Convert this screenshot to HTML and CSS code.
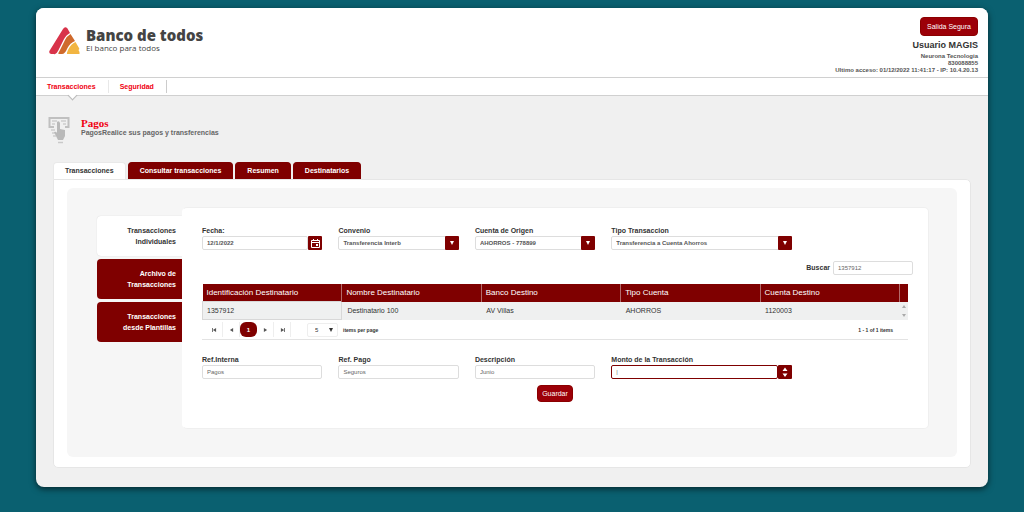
FILE: index.html
```html
<!DOCTYPE html>
<html lang="es">
<head>
<meta charset="utf-8">
<title>Banco de todos - Pagos</title>
<link rel="stylesheet" href="styles.css">
</head>
<body>
<div class="shell">
  <header class="header">
    <div class="brand">
      <svg class="brand-mark" viewBox="0 0 31 28" aria-hidden="true">
        <path fill="#d8334a" d="M14 2Q16-1 18.500 1.500L21 6Q17 8 14.500 13L9 24Q7 28 5 27H2Q-1 26 1 23Z"/>
        <path fill="#cf6a2c" d="M21.500 7L26 14Q21 16 18.500 21Q16 27 13 27H9.500Q9 26 11 23L16 13Q18 9 21.500 7Z"/>
        <path fill="#f2b541" d="M26.500 15L30 21Q31 22 29.500 23Q31 25 30.500 27H18Q17.500 26 19.500 22Q22 17 26.500 15Z"/>
      </svg>
      <div class="brand-text">
        <strong class="brand-name">Banco de todos</strong>
        <span class="brand-tag">El banco para todos</span>
      </div>
    </div>
    <div class="account">
      <button class="button" type="button">Salida Segura</button>
      <strong class="user">Usuario MAGIS</strong>
      <span>Neurona Tecnologia</span>
      <span>830088855</span>
      <span>Ultimo acceso: 01/12/2022 11:41:17 - IP: 10.4.20.13</span>
    </div>
  </header>
  <nav class="nav">
    <a class="nav-link nav-current" href="#transacciones">Transacciones</a>
    <a class="nav-link" href="#seguridad">Seguridad</a>
  </nav>
  <main class="main">
    <div class="page-title">
      <svg class="page-icon" viewBox="0 0 24 28" aria-hidden="true">
        <path fill="none" stroke="#c0c0c0" stroke-width="2" d="M6 11H1.500V2H20.500V11H17"/>
        <path fill="none" stroke="#bcbcbc" d="M4 5H9M4 8H7M13 5H18M15 8H18M3 14H7M4 17H7M5 20H8"/>
        <path fill="#b9b9b9" d="M9 6Q11 4 12 7V13L17 14V20L15 24H10L6 16Q8 15 9 17Z"/>
        <path stroke="#c9c9c9" stroke-width="1.500" d="M10 26.500H15"/>
      </svg>
      <div>
        <h1 class="title">Pagos</h1>
        <p class="subtitle">PagosRealice sus pagos y transferencias</p>
      </div>
    </div>
    <div class="tabs" role="tablist">
      <button class="tab tab-current" type="button" role="tab" aria-selected="true">Transacciones</button>
      <button class="tab" type="button" role="tab">Consultar transacciones</button>
      <button class="tab" type="button" role="tab">Resumen</button>
      <button class="tab" type="button" role="tab">Destinatarios</button>
    </div>
    <section class="card">
      <div class="well">
        <div class="side" role="tablist">
          <button class="side-tab side-current" type="button" role="tab" aria-selected="true">Transacciones<br>Individuales</button>
          <button class="side-tab" type="button" role="tab">Archivo de<br>Transacciones</button>
          <button class="side-tab" type="button" role="tab">Transacciones<br>desde Plantillas</button>
        </div>
        <form class="panel">
          <div class="fields">
            <div class="field">
              <label for="fecha">Fecha:</label>
              <div class="control">
                <input class="input strong" id="fecha" type="text" value="12/1/2022">
                <button class="addon" type="button" aria-label="Calendario">
                  <svg class="calendar" viewBox="0 0 9 9"><path fill="none" stroke="#fff" d="M0.500 1.500H8.500V8.500H0.500ZM1 3.500H8M2.500 0V2M6.500 0V2"/><path fill="#fff" d="M5 5H7V7H5Z"/></svg>
                </button>
              </div>
            </div>
            <div class="field">
              <label for="convenio">Convenio</label>
              <div class="control">
                <select class="input strong" id="convenio"><option>Transferencia Interb</option></select>
                <span class="addon over"><i class="down"></i></span>
              </div>
            </div>
            <div class="field">
              <label for="cuenta">Cuenta de Origen</label>
              <div class="control">
                <select class="input strong" id="cuenta"><option>AHORROS - 778899</option></select>
                <span class="addon over"><i class="down"></i></span>
              </div>
            </div>
            <div class="field">
              <label for="tipo">Tipo Transaccion</label>
              <div class="control">
                <select class="input strong" id="tipo"><option>Transferencia a Cuenta Ahorros</option></select>
                <span class="addon over"><i class="down"></i></span>
              </div>
            </div>
          </div>
          <div class="search">
            <label for="buscar">Buscar</label>
            <input class="input search-input" id="buscar" type="text" value="1357912">
          </div>
          <table class="grid">
            <colgroup><col><col><col><col><col><col class="scroll-col"></colgroup>
            <thead>
              <tr><th>Identificación Destinatario</th><th>Nombre Destinatario</th><th>Banco Destino</th><th>Tipo Cuenta</th><th>Cuenta Destino</th><th></th></tr>
            </thead>
            <tbody>
              <tr><td>1357912</td><td>Destinatario 100</td><td>AV Villas</td><td>AHORROS</td><td>1120003</td><td class="scroll"><svg class="scroll-arrows" viewBox="0 0 4 14"><path fill="#aaa" d="M0 4L2 1L4 4ZM0 10H4L2 13Z"/></svg></td></tr>
            </tbody>
          </table>
          <div class="pager">
            <button class="page" type="button" aria-label="Primera"><svg class="arrow" viewBox="0 0 6 5"><path d="M0 0H1V5H0ZM5 0V5L1 2.500Z"/></svg></button>
            <button class="page" type="button" aria-label="Anterior"><svg class="arrow" viewBox="0 0 6 5"><path d="M5 0V5L1 2.500Z"/></svg></button>
            <button class="page page-current" type="button">1</button>
            <button class="page" type="button" aria-label="Siguiente"><svg class="arrow" viewBox="0 0 6 5"><path d="M1 0V5L5 2.500Z"/></svg></button>
            <button class="page" type="button" aria-label="Última"><svg class="arrow" viewBox="0 0 6 5"><path d="M1 0V5L5 2.500ZM5 0H6V5H5Z"/></svg></button>
            <div class="size-box">
              <select class="size" id="size"><option>5</option></select>
              <i class="down down-dark"></i>
            </div>
            <label class="small" for="size">items per page</label>
            <span class="small range">1 - 1 of 1 items</span>
          </div>
          <div class="fields">
            <div class="field">
              <label for="ref">Ref.Interna</label>
              <input class="input" id="ref" type="text" value="Pagos">
            </div>
            <div class="field">
              <label for="pago">Ref. Pago</label>
              <input class="input" id="pago" type="text" value="Seguros">
            </div>
            <div class="field">
              <label for="desc">Descripción</label>
              <input class="input" id="desc" type="text" value="Junio">
            </div>
            <div class="field">
              <label for="monto">Monto de la Transacción</label>
              <div class="control control-focus">
                <input class="input" id="monto" type="text" placeholder="|">
                <button class="addon" type="button" aria-label="Cambiar monto">
                  <svg class="spin" viewBox="0 0 6 10"><path fill="#fff" d="M0.500 4L3 0.500L5.500 4ZM0.500 6.500H5.500L3 10Z"/></svg>
                </button>
              </div>
            </div>
          </div>
          <button class="button save" type="button">Guardar</button>
        </form>
      </div>
    </section>
  </main>
</div>
</body>
</html>
```
FILE: styles.css
```css
* {
  box-sizing: border-box;
}

body {
  margin: 0;
  padding: 8px 36px 25px;
  background: #0a6070;
  color: #333;
  font: 7px/10px "Liberation Sans", Arial, sans-serif;
}

button,
input,
select {
  margin: 0;
  font: inherit;
}

.shell {
  border-radius: 8px;
  background: #f0f0f0;
  box-shadow: 0 2px 6px rgba(0, 0, 0, 0.6);
  overflow: hidden;
}

.header {
  display: flex;
  justify-content: space-between;
  align-items: flex-start;
  padding: 9px 10px 3px 13px;
  border-bottom: 1px solid #d0d0d0;
  background: #fff;
}

.brand {
  display: flex;
  gap: 6px;
  padding-top: 10px;
}

.brand-mark {
  width: 31px;
  height: 28px;
}

.brand-text {
  display: flex;
  flex-direction: column;
  color: #444;
  font-family: "Open Sans", sans-serif;
}

.brand-name {
  font-size: 15px;
  font-weight: 800;
  line-height: 16px;
}

.brand-tag {
  font-size: 8px;
  line-height: 9px;
}

.account {
  display: flex;
  flex-direction: column;
  align-items: flex-end;
  color: #555;
  font-size: 6px;
  font-weight: bold;
  line-height: 7px;
}

.button {
  padding: 0 6px;
  border: 1px solid #8b0000;
  border-radius: 4px;
  background: #9c0008;
  color: #fff;
  font-size: 7px;
  font-weight: normal;
  line-height: 17px;
}

.user {
  padding: 4px 0 2px;
  color: #333;
  font-size: 9px;
  line-height: 11px;
}

.nav {
  display: flex;
  align-items: center;
  border-bottom: 1px solid #d0d0d0;
  background: #fff;
}

.nav-link {
  position: relative;
  margin: 2px 0;
  padding: 0 12px 0 11px;
  border-right: 1px solid #ccc;
  color: #f00010;
  font-weight: bold;
  line-height: 13px;
  text-decoration: none;
}

.nav-current {
  border-right-color: #e8e8e8;
}

.nav-current::after {
  content: "";
  position: absolute;
  bottom: -6px;
  left: 33px;
  width: 6px;
  height: 6px;
  border: solid #bbb;
  border-width: 0 1px 1px 0;
  background: linear-gradient(135deg, transparent 50%, #fff 50%);
  transform: rotate(45deg);
}

.main {
  padding: 20px 17px 19px;
}

.page-title {
  display: flex;
  gap: 9px;
  margin-left: -5px;
}

.page-icon {
  width: 24px;
  height: 28px;
}

.title {
  margin: 2px 0 0;
  color: #f00010;
  font: bold 11px/11px "Liberation Serif", serif;
}

.subtitle {
  margin: 0;
  color: #666;
  font-weight: bold;
  line-height: 7px;
}

.tabs {
  display: flex;
  gap: 2px;
  margin-top: 18px;
}

.tab {
  padding: 0 11px;
  border: 1px solid #7f0000;
  border-bottom: 0;
  border-radius: 4px 4px 0 0;
  background: #7f0000;
  color: #fff;
  font-weight: bold;
  line-height: 16px;
}

.tab-current {
  border-color: #e9e9e9;
  background: #fff;
  color: #333;
}

.card {
  padding: 8px 13px 10px;
  border: 1px solid #e6e6e6;
  border-radius: 0 5px 5px 5px;
  background: #fff;
}

.well {
  display: grid;
  grid-template-columns: 85px 1fr;
  padding: 19px 28px 28px 30px;
  border-radius: 6px;
  background: #f6f6f6;
}

.side {
  display: flex;
  flex-direction: column;
  gap: 3px;
  padding-top: 9px;
}

.side-tab {
  padding: 9px 6px;
  border: 0;
  border-radius: 4px 0 0 4px;
  background: #7f0000;
  color: #fff;
  font-weight: bold;
  line-height: 11px;
  text-align: right;
}

.side-current {
  background: #fff;
  box-shadow: 0 0 1px #ccc;
  clip-path: inset(-1px 0 -1px -1px);
  color: #333;
}

.panel {
  display: flex;
  flex-direction: column;
  padding: 18px 20px 26px 19px;
  border: 1px solid #efefef;
  border-left-color: #fff;
  border-radius: 5px;
  background: #fff;
}

.fields {
  display: grid;
  grid-template-columns: 2fr 2fr 2fr 3fr;
  gap: 16px;
  margin-right: 116px;
}

.field {
  display: flex;
  flex-direction: column;
}

label {
  font-weight: bold;
}

.control {
  position: relative;
  display: flex;
}

.input {
  appearance: none;
  width: 100%;
  min-width: 0;
  height: 14px;
  padding: 0 4px;
  border: 1px solid #ddd;
  border-radius: 2px;
  outline: 0;
  background: #fff;
  color: #666;
  font-size: 6px;
  line-height: 12px;
}

.strong {
  color: #555;
  font-weight: bold;
}

.addon {
  display: grid;
  flex: none;
  place-items: center;
  width: 14px;
  height: 14px;
  padding: 0;
  border: 0;
  border-radius: 1px;
  background: #7f0000;
}

.over {
  position: absolute;
  top: 0;
  right: 0;
  pointer-events: none;
}

.control-focus .input {
  border-color: #7f0000;
}

.calendar {
  width: 9px;
  height: 9px;
}

.spin {
  width: 6px;
  height: 10px;
}

.down {
  border: 2px solid transparent;
  border-top: 4px solid #fff;
  border-bottom: 0;
}

.down-dark {
  position: absolute;
  top: 5px;
  right: 5px;
  border-top-color: #333;
  pointer-events: none;
}

.search {
  display: flex;
  align-items: center;
  justify-content: flex-end;
  gap: 3px;
  margin: 11px -5px 9px 0;
}

.search-input {
  width: 80px;
}

.grid {
  width: 100%;
  border-collapse: collapse;
  table-layout: fixed;
  font-size: 8px;
  line-height: 10px;
}

.scroll-col {
  width: 8px;
}

.grid th {
  padding: 4px 5px 3px 4px;
  border-right: 1px solid #b36b6b;
  background: #7f0000;
  color: #fff;
  font-weight: normal;
  text-align: left;
  white-space: nowrap;
}

.grid th:last-child {
  border-right: 0;
}

.grid td {
  height: 18px;
  padding: 0 5px;
  background: #eff0f0;
  font-size: 7px;
}

.grid td:first-child {
  padding-left: 4px;
  border: 1px solid #d8d8d8;
}

.grid .scroll {
  padding: 0 2px;
}

.scroll-arrows {
  display: block;
  width: 4px;
  height: 14px;
}

.pager {
  display: flex;
  align-items: center;
  padding: 2px 15px 2px 4px;
  border-bottom: 1px solid #e3e3e3;
}

.page {
  display: grid;
  place-items: center;
  width: 17px;
  height: 15px;
  padding: 0;
  border: 0;
  border-right: 1px solid #eee;
  background: #fff;
  font-size: 6px;
}

.page-current {
  border: 0;
  border-radius: 6px;
  background: #7f0000;
  color: #fff;
  font-weight: bold;
}

.arrow {
  width: 5px;
  height: 4px;
  fill: #555;
}

.size-box {
  position: relative;
  margin: 0 5px 0 16px;
}

.size {
  appearance: none;
  display: block;
  width: 31px;
  height: 14px;
  padding: 0 7px;
  border: 1px solid #eee;
  border-radius: 2px;
  background: #fff;
  color: #333;
  font-size: 6px;
}

.small {
  font-size: 5px;
  font-weight: bold;
}

.range {
  margin-left: auto;
}

.pager + .fields {
  margin-top: 15px;
}

.save {
  align-self: center;
  margin-top: 6px;
  padding: 0 4px;
  line-height: 15px;
}
```
